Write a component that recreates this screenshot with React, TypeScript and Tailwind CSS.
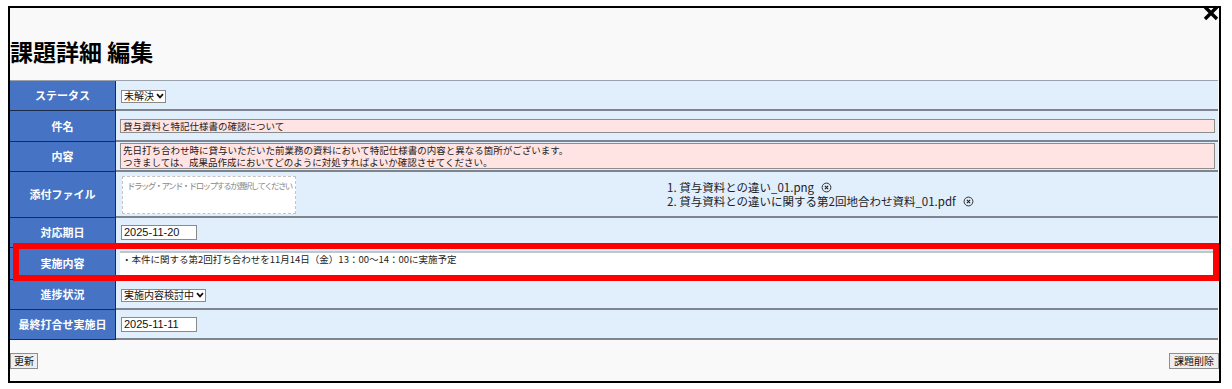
import React from 'react'

const jp = { fontFamily: '"Noto Sans CJK JP", "Noto Sans", sans-serif' }

function Label({ children }: { children: React.ReactNode }) {
  return (
    <div className="w-[106px] shrink-0 flex items-center justify-center bg-[#4673c4] border-r border-b border-[#1c2b49] text-white text-[11px] font-bold whitespace-nowrap">
      {children}
    </div>
  )
}

function Value({ children, className = '' }: { children?: React.ReactNode; className?: string }) {
  return (
    <div className={`flex-1 bg-[#e1eefc] border-b-2 border-[#7f8590] pl-[4px] pr-[3px] ${className}`}>
      {children}
    </div>
  )
}

function FakeSelect({ text }: { text: string }) {
  return (
    <div className="h-[13px] bg-white border border-[#8a8a8a] flex items-center gap-[2px] pl-[2px] pr-[1px] text-[10px] leading-none text-[#111] whitespace-nowrap">
      <span>{text}</span>
      <svg width="8" height="6" viewBox="0 0 8 6">
        <path d="M1 1.2 L4 4.4 L7 1.2" fill="none" stroke="#111" strokeWidth="1.7" />
      </svg>
    </div>
  )
}

function DateBox({ v }: { v: string }) {
  return (
    <div className="w-[76px] h-[15px] bg-white border border-[#8a8a8a] pl-[2px] text-[11px] leading-[13px] text-[#111]" style={{ fontFamily: '"Liberation Sans", sans-serif' }}>
      {v}
    </div>
  )
}

function RemoveIcon() {
  return (
    <svg width="11" height="11" viewBox="0 0 12 12" className="inline-block ml-[7px] -mt-[2px] align-middle">
      <circle cx="6" cy="6" r="4.8" fill="none" stroke="#222" strokeWidth="1" />
      <path d="M4.2 4.2 L7.8 7.8 M7.8 4.2 L4.2 7.8" stroke="#222" strokeWidth="1.2" />
    </svg>
  )
}

export default function App() {
  return (
    <div className="w-[1232px] h-[389px] bg-white pt-[6px] pl-[8px]" style={jp}>
      <div className="relative w-[1213px] h-[377px] border-2 border-black bg-[#f9f9f9] flex flex-col">
        <svg width="18" height="18" viewBox="0 0 18 18" className="absolute right-[-1px] top-[-4px]">
          <path d="M3 3 L15 15 M15 3 L3 15" stroke="#000" strokeWidth="3.4" />
        </svg>

        <div className="h-[72px] pt-[27px]">
          <h1 className="text-[23px] leading-[33px] font-bold text-black">課題詳細 編集</h1>
        </div>

        <div className="w-[1208px] border-t border-[#9aa3ad] flex flex-col">
          <div className="h-[30px] flex">
            <Label>ステータス</Label>
            <Value className="flex items-center">
              <div className="ml-[1px] mt-[2px]">
                <FakeSelect text="未解決" />
              </div>
            </Value>
          </div>

          <div className="h-[31px] flex">
            <Label>件名</Label>
            <Value className="flex items-center">
              <div className="w-full h-[14px] bg-[#ffe4e3] border border-[#8d8d8d] pl-[2px] text-[9.5px] leading-[12px] text-[#222]">
                貸与資料と特記仕様書の確認について
              </div>
            </Value>
          </div>

          <div className="h-[30px] flex">
            <Label>内容</Label>
            <Value className="flex items-center">
              <div className="w-full h-[26px] bg-[#ffe4e3] border border-[#8d8d8d] pl-[2px] text-[9.5px] leading-[12px] text-[#222]">
                <div>先日打ち合わせ時に貸与いただいた前業務の資料において特記仕様書の内容と異なる箇所がございます。</div>
                <div>つきましては、成果品作成においてどのように対処すればよいか確認させてください。</div>
              </div>
            </Value>
          </div>

          <div className="h-[46px] flex">
            <Label>添付ファイル</Label>
            <Value className="flex items-start pt-[4px]">
              <div className="ml-[2px] w-[174px] h-[38px] shrink-0 bg-white border border-dashed border-[#c4c4c4] pl-[4px] pt-[2px] text-[8.5px] leading-[12px] text-[#888] tracking-[-1.6px] whitespace-nowrap">
                ドラッグ・アンド・ドロップするか選択してください
              </div>
              <ol className="ml-[371px] mt-[4px] text-[11.5px] leading-[14px] text-[#222] whitespace-nowrap">
                <li>1. 貸与資料との違い_01.png<RemoveIcon /></li>
                <li>2. 貸与資料との違いに関する第2回地合わせ資料_01.pdf<RemoveIcon /></li>
              </ol>
            </Value>
          </div>

          <div className="h-[30px] flex">
            <Label>対応期日</Label>
            <Value className="flex items-center">
              <div className="ml-[1px]">
                <DateBox v="2025-11-20" />
              </div>
            </Value>
          </div>

          <div className="relative h-[32px] flex">
            <Label>実施内容</Label>
            <Value className="flex items-center">
              <div className="w-[1094px] h-[24px] bg-white border-t-2 border-[#c3c6c9] pl-[2px] text-[9.5px] leading-[12px] text-[#222]">
                ・本件に関する第2回打ち合わせを11月14日（金）13：00～14：00に実施予定
              </div>
            </Value>
            <div className="absolute left-[3px] top-[-5px] w-[1206px] h-[38px] border-[6px] border-[#ff0000] pointer-events-none" />
          </div>

          <div className="h-[30px] flex">
            <Label>進捗状況</Label>
            <Value className="flex items-center">
              <div className="ml-[1px] mt-[2px]">
                <FakeSelect text="実施内容検討中" />
              </div>
            </Value>
          </div>

          <div className="h-[30px] flex">
            <Label>最終打合せ実施日</Label>
            <Value className="flex items-center">
              <div className="ml-[1px]">
                <DateBox v="2025-11-11" />
              </div>
            </Value>
          </div>
        </div>

        <div className="flex justify-between pt-[13px] w-[1209px]">
          <button className="h-[16px] px-[3px] bg-[#efefef] border border-[#8f8f8f] text-[10px] leading-[14px] text-[#111]">更新</button>
          <button className="h-[16px] px-[4px] bg-[#efefef] border border-[#8f8f8f] text-[10px] leading-[14px] text-[#111]">課題削除</button>
        </div>
      </div>
    </div>
  )
}
